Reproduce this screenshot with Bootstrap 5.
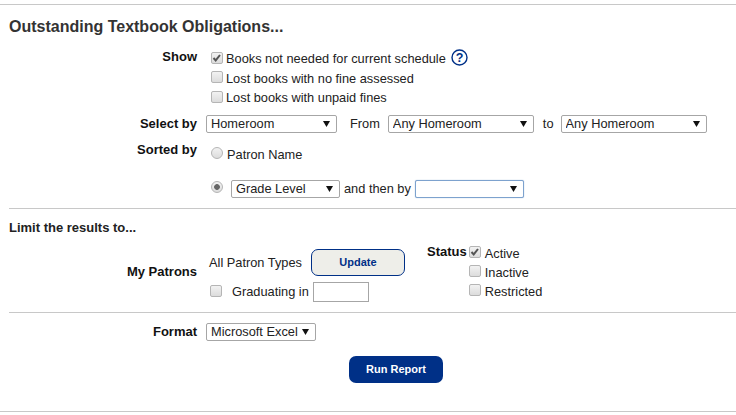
<!DOCTYPE html>
<html lang="en">
<head>
<meta charset="utf-8">
<title>Outstanding Textbook Obligations</title>
<link href="https://cdn.jsdelivr.net/npm/bootstrap@5.3.0/dist/css/bootstrap.min.css" rel="stylesheet">
<style>
html,body{height:415px;overflow:hidden;background:#fff}
body{font-family:"Liberation Sans",Arial,sans-serif;font-size:12.8px;line-height:15px;color:#222}
.rule{height:1px;background:#c8c8c8;border:0;margin:0;opacity:1}
.rule-in{margin-left:9px}
.page-top{height:4px}
.rpt-title{font-size:16px;line-height:18px;font-weight:700;color:#333;margin:13px 0 0 9px}
.lbl{width:197px;flex:none;text-align:right;font-weight:700;font-size:13px;color:#111}
.body-col{margin-left:9px}
.cb,.rd{appearance:none;-webkit-appearance:none;width:12px;height:12px;margin:0 0 2px;flex:none;border:1px solid #b5b5b5;background:linear-gradient(#f2f2f2,#dcdcdc)}
.cb{border-radius:2px}
.rd{border-radius:50%;margin-bottom:4px}
.cb:checked{background:url("data:image/svg+xml,%3Csvg xmlns='http://www.w3.org/2000/svg' viewBox='0 0 12 12'%3E%3Cpath d='M2.5 6l2.2 2.4L9 3' fill='none' stroke='%23555' stroke-width='2'/%3E%3C/svg%3E") center/12px no-repeat,linear-gradient(#f2f2f2,#dcdcdc)}
.rd:checked{background:radial-gradient(circle,#666 0 2.5px,transparent 3.2px),linear-gradient(#f2f2f2,#dcdcdc)}
.sel{appearance:none;-webkit-appearance:none;height:18px;border:1px solid #a6a6a6;border-radius:2px;padding:0 14px 0 4px;font:12.8px/16px "Liberation Sans",Arial,sans-serif;color:#222;background:#fff url("data:image/svg+xml,%3Csvg xmlns='http://www.w3.org/2000/svg' width='7' height='6'%3E%3Cpath d='M0 0h7L3.5 6z' fill='%23111'/%3E%3C/svg%3E") right 6px center no-repeat;margin:0;flex:none}
.sel-focus{border-color:#7da2ce;box-shadow:0 0 1px #7da2ce}
.w-home{width:131px}.w-from{width:146px}.w-to{width:146px}.w-grade{width:109px}.w-then{width:109px}.w-fmt{width:110px}
.box-in{margin-left:5px}
.help-mark{width:17px;height:17px;flex:none;margin:0 0 3px 5px}
.show-block{margin-top:13px}
.line-show{height:19.5px}
.opt-text{margin-left:3px}
.select-row{margin-top:7px;height:18px}
.from-lbl{margin:0 8px 0 13px;flex:none}
.to-lbl{margin:0 7px 0 9px;flex:none}
.sort-row{margin-top:9px}
.sort-a{height:26px}
.sort-b{margin-top:12px;height:18px}
.rd-text{margin-left:4px}
.grade-gap{margin-left:8px}
.then-lbl{margin:0 4px;flex:none}
.gap-rule{margin-top:10px}
.limit-title{font-weight:700;font-size:13px;color:#222;margin:11px 0 0 9px;line-height:15px}
.patron-row{margin-top:9px;height:68px}
.patron-lbl{padding-top:20px}
.mid-col{width:221px;flex:none;padding-top:5px}
.patron-type{width:94px;flex:none;margin-left:3px}
.upd-btn{width:94px;height:27px;border:1px solid #003087;border-radius:7px;background:#eeeee9;color:#003087;font:700 11px/25px "Liberation Sans",Arial,sans-serif;padding:0;text-align:center;margin-left:8px}
.upd-btn:hover{background:#eeeee9;color:#003087;border-color:#003087}
.grad-row{margin-top:6px}
.grad-cb{margin-left:4px}
.grad-text{margin:0 4px 0 10px;flex:none}
.grad-box{width:56px;height:20px;border:1px solid #a6a6a6;padding:0;margin:0;flex:none}
.status-col .line{height:19px}
.status-lbl{font-weight:700;font-size:13px;color:#111;margin-right:2px}
.status-text{margin-left:4px}
.fmt-row{margin-top:10px}
.run-wrap{margin:15px 0 0 349px}
.run-btn{width:94px;height:27px;background:#003087;color:#fff;border:0;border-radius:7px;font:700 11px/27px "Liberation Sans",Arial,sans-serif;padding:0;display:block}
.run-btn:hover{background:#003087;color:#fff}
.end-rule{margin-top:28px}
</style>
</head>
<body>
<div class="page-top"></div>
<hr class="rule">
<h1 class="rpt-title">Outstanding Textbook Obligations...</h1>

<div class="d-flex show-block">
  <div class="lbl">Show</div>
  <div class="body-col">
    <div class="d-flex align-items-center line-show">
      <input class="cb box-in" type="checkbox" checked aria-label="Books not needed"><span class="opt-text">Books not needed for current schedule</span>
      <svg class="help-mark" viewBox="0 0 17 17"><circle cx="8.5" cy="8.5" r="7.5" fill="none" stroke="#003087" stroke-width="1.4"/><text x="8.5" y="13" text-anchor="middle" font-family="Liberation Sans" font-weight="700" font-size="12.5" fill="#003087">?</text></svg>
    </div>
    <div class="d-flex align-items-center line-show">
      <input class="cb box-in" type="checkbox" aria-label="Lost books no fine"><span class="opt-text">Lost books with no fine assessed</span>
    </div>
    <div class="d-flex align-items-center line-show">
      <input class="cb box-in" type="checkbox" aria-label="Lost books unpaid"><span class="opt-text">Lost books with unpaid fines</span>
    </div>
  </div>
</div>

<div class="d-flex align-items-center select-row">
  <div class="lbl">Select by</div>
  <div class="body-col d-flex align-items-center">
    <select class="sel w-home" aria-label="Select by"><option>Homeroom</option></select>
    <span class="from-lbl">From</span>
    <select class="sel w-from" aria-label="From"><option>Any Homeroom</option></select>
    <span class="to-lbl">to</span>
    <select class="sel w-to" aria-label="To"><option>Any Homeroom</option></select>
  </div>
</div>

<div class="d-flex sort-row">
  <div class="lbl">Sorted by</div>
  <div class="body-col">
    <div class="d-flex align-items-center sort-a">
      <input class="rd box-in" type="radio" name="sort" aria-label="Patron Name"><span class="rd-text">Patron Name</span>
    </div>
    <div class="d-flex align-items-center sort-b">
      <input class="rd box-in" type="radio" name="sort" checked aria-label="Grade Level">
      <select class="sel w-grade grade-gap" aria-label="Grade"><option>Grade Level</option></select>
      <span class="then-lbl">and then by</span>
      <select class="sel sel-focus w-then" aria-label="Then by"><option></option></select>
    </div>
  </div>
</div>

<hr class="rule rule-in gap-rule">
<div class="limit-title">Limit the results to...</div>

<div class="d-flex patron-row">
  <div class="lbl patron-lbl">My Patrons</div>
  <div class="body-col">
    <div class="mid-col">
      <div class="d-flex align-items-center">
        <span class="patron-type">All Patron Types</span>
        <button type="button" class="btn upd-btn">Update</button>
      </div>
      <div class="d-flex align-items-center grad-row">
        <input class="cb grad-cb" type="checkbox" aria-label="Graduating"><span class="grad-text">Graduating in</span>
        <input class="grad-box" type="text" aria-label="Graduating year">
      </div>
    </div>
  </div>
  <div class="status-col d-flex">
    <div class="status-lbl">Status</div>
    <div>
      <div class="d-flex align-items-center line"><input class="cb" type="checkbox" checked aria-label="Active"><span class="status-text">Active</span></div>
      <div class="d-flex align-items-center line"><input class="cb" type="checkbox" aria-label="Inactive"><span class="status-text">Inactive</span></div>
      <div class="d-flex align-items-center line"><input class="cb" type="checkbox" aria-label="Restricted"><span class="status-text">Restricted</span></div>
    </div>
  </div>
</div>

<hr class="rule rule-in">
<div class="d-flex align-items-center fmt-row">
  <div class="lbl">Format</div>
  <div class="body-col"><select class="sel w-fmt" aria-label="Format"><option>Microsoft Excel</option></select></div>
</div>
<div class="run-wrap"><button type="button" class="btn run-btn">Run Report</button></div>
<hr class="rule end-rule">
</body>
</html>
